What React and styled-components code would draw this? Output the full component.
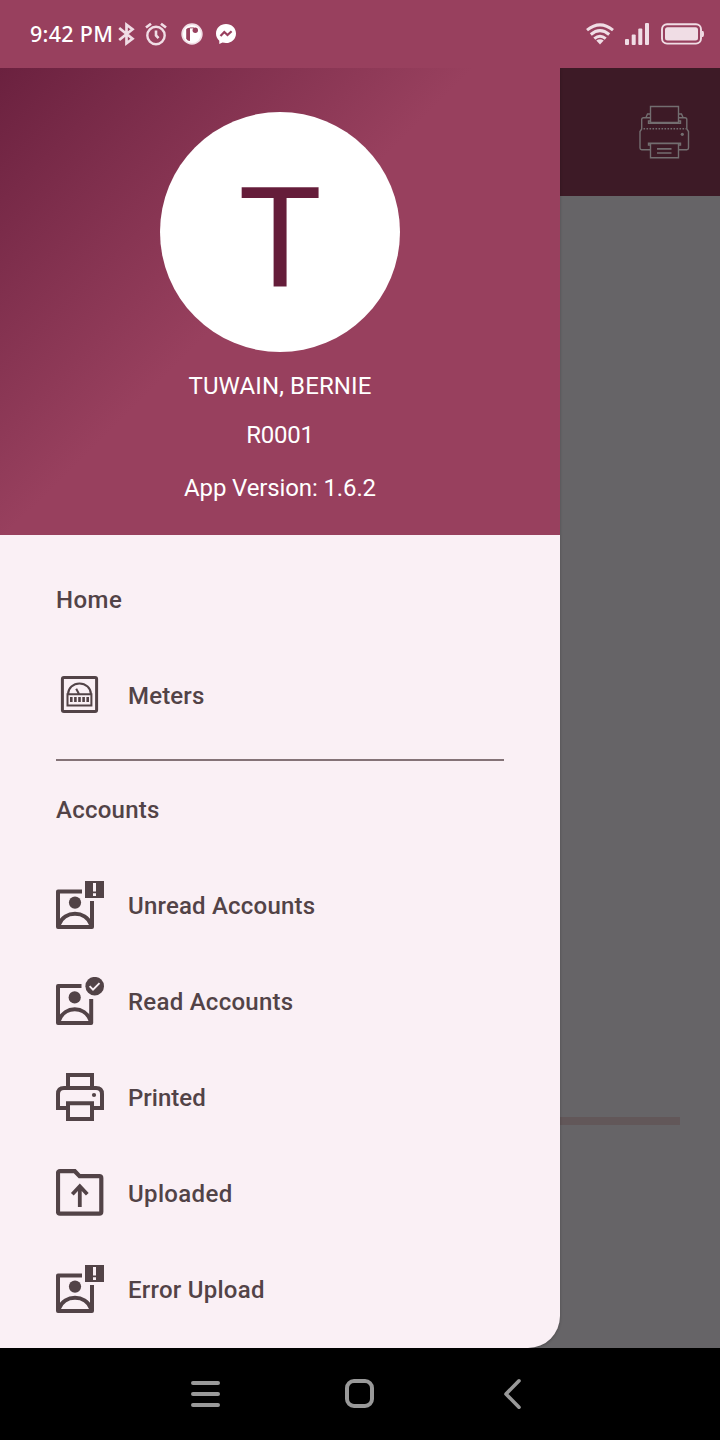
import React from "react";
import styled, { createGlobalStyle } from "styled-components";

const GlobalStyle = createGlobalStyle`
  * { box-sizing: border-box; }
  body { margin: 0; background: #000; }
  svg { display: block; flex: none; }
`;

const Screen = styled.div`
  width: 720px;
  height: 1440px;
  display: flex;
  flex-direction: column;
  overflow: hidden;
  font-family: Roboto, "Liberation Sans", sans-serif;
`;

const StatusBar = styled.header`
  height: 68px;
  flex: none;
  display: flex;
  align-items: center;
  justify-content: space-between;
  padding: 0 15px 0 30px;
  background: #98405e;
  color: #fff;
`;

const StatusGroup = styled.div`
  display: flex;
  align-items: center;
  gap: ${(p) => p.$gap}px;
`;

const Clock = styled.span`
  width: 83px;
  white-space: nowrap;
  font: 500 21.5px/30px "Noto Sans", sans-serif;
  letter-spacing: 0.3px;
`;

const Body = styled.div`
  height: 1280px;
  flex: none;
  display: grid;
  grid-template-columns: 560px 160px;
  background: #666467;
  overflow: hidden;
`;

const Drawer = styled.aside`
  background: #faf0f5;
  border-radius: 0 0 32px 0;
  overflow: hidden;
  box-shadow: 0 1px 3px rgba(0, 0, 0, 0.25);
  z-index: 1;
`;

const Profile = styled.section`
  height: 467px;
  padding-top: 44px;
  display: flex;
  flex-direction: column;
  align-items: center;
  background: linear-gradient(135deg, #6b213f 0%, #98405e 46%);
`;

const Avatar = styled.div`
  width: 240px;
  height: 240px;
  flex: none;
  border-radius: 50%;
  background: #fff;
  color: #651d3a;
  display: flex;
  align-items: center;
  justify-content: center;
  font-size: 140px;
  line-height: 240px;
  padding-top: 12px;
`;

const ProfileLine = styled.div`
  margin-top: ${(p) => p.$top}px;
  height: 32px;
  line-height: 32px;
  font-size: 24px;
  letter-spacing: ${(p) => p.$tracking}px;
  color: #fff;
`;

const Menu = styled.nav`
  padding: 17px 56px 0;
  color: #524347;
  font-size: 24px;
  font-weight: 500;
`;

const SectionTitle = styled.h2`
  margin: 0;
  height: 96px;
  line-height: 96px;
  font-size: inherit;
  font-weight: inherit;
  letter-spacing: ${(p) => p.$tracking}px;
`;

const MenuRow = styled.div`
  height: 96px;
  display: flex;
  align-items: center;
  gap: 24px;
  letter-spacing: ${(p) => p.$tracking}px;
  svg { margin-bottom: 2px; }
`;

const Divider = styled.hr`
  margin: 15px 0 1px;
  height: 2px;
  border: 0;
  background: #847377;
`;

const Scrim = styled.main`
  display: flex;
  flex-direction: column;
`;

const AppBar = styled.div`
  height: 128px;
  padding: 36px 0 0 78px;
  background: #3d1a26;
`;

const Progress = styled.div`
  width: 120px;
  height: 8px;
  margin-top: 921px;
  background: #625759;
`;

const NavBar = styled.footer`
  height: 92px;
  flex: none;
  display: flex;
  align-items: center;
  gap: 124px;
  padding-left: 190px;
  background: #000;
`;

const Icon = ({ w = 48, h = 48, children, ...rest }) => (
  <svg width={w} height={h} viewBox={`0 0 ${w} ${h}`} fill="none" {...rest}>
    {children}
  </svg>
);

const MeterIcon = () => (
  <Icon stroke="#524347">
    <rect x="6.4" y="6.4" width="34.2" height="34.2" rx="1.5" strokeWidth="3" />
    <path d="M11.5 23.3H35.4V34.6H11.5ZM12.1 23A11.4 10.6 0 0 1 34.9 23M20.2 17.8L23 23" strokeWidth="2" />
    <path d="M14 28.6H33.5" strokeWidth="5" strokeDasharray="2.6 1.5" />
  </Icon>
);

const AlertAccountIcon = () => (
  <Icon>
    <path d="M26 10.5H2V46H36V20" stroke="#524347" strokeWidth="4" strokeLinejoin="round" />
    <path d="M3 43.5C8.5 29 29.5 29 35 43.5" stroke="#524347" strokeWidth="4" />
    <circle cx="19" cy="21.6" r="6.1" fill="#524347" />
    <path d="M29 0H48V17H29Z" fill="#524347" />
    <path d="M37 2H40V10.4H37ZM37 12.2H40V15H37Z" fill="#faf0f5" />
  </Icon>
);

const CheckAccountIcon = () => (
  <Icon>
    <path d="M25.5 9H2V46H35.2V22" stroke="#524347" strokeWidth="4" strokeLinejoin="round" />
    <path d="M3 43.5C8.5 28.5 29 28.5 34.5 43.5" stroke="#524347" strokeWidth="4" />
    <circle cx="18.7" cy="20.4" r="6.1" fill="#524347" />
    <circle cx="38.7" cy="9.2" r="9.3" fill="#524347" />
    <path d="M33.6 9.2L37 12.6L43.5 6.1" stroke="#faf0f5" strokeWidth="1.9" />
  </Icon>
);

const PrintIcon = () => (
  <Icon stroke="#524347" strokeWidth="4">
    <path d="M12 14V2H36V14M12 35H2V21Q2 15 8 15H40Q46 15 46 21V35H36M12 30.3H36V46H12Z" />
    <circle cx="38" cy="22" r="2.1" fill="#524347" stroke="none" />
  </Icon>
);

const UploadIcon = () => (
  <Icon stroke="#524347" strokeWidth="4.2">
    <path d="M4 2.2H18.8L23.6 7.1H43.3Q45.3 7.1 45.3 9.1V42.7Q45.3 44.7 43.3 44.7H4Q2 44.7 2 42.7V4.2Q2 2.2 4 2.2Z" />
    <path d="M23.8 38V17M16.3 25.2L23.8 17.3L31.3 25.2" strokeWidth="3.8" />
  </Icon>
);

const AppBarPrinter = () => (
  <Icon w={52} h={56} stroke="#736e70" strokeWidth="1.4">
    <path d="M12.5 2.5H40.5V18.5H12.5ZM12 17H10.5V19.2H42.5V17H41M12.5 10H9.5L8 13.5M40.5 10H43.5L45 13.5M12.5 13.7H5.5Q3.7 13.7 3.7 15.5V25L2 27.5V44Q2 45.7 3.7 45.7H12M40.5 13.7H47Q48.8 13.7 48.8 15.5V25L50.5 27.5V44Q50.5 45.7 48.8 45.7H41M12.5 41H10.5V39.2H42.5V41H40.5M12.5 39.5H40.5V53.7H12.5Z" />
    <path d="M5.5 24.8H48" strokeDasharray="1.6 1.4" />
    <path d="M19 44.8H33.5M19 49H33.5" strokeWidth="1.7" />
    <circle cx="44.3" cy="30.3" r="1.6" fill="#736e70" stroke="none" />
  </Icon>
);

const BluetoothIcon = () => (
  <Icon w={18} h={24} stroke="#f0dde5" strokeWidth="2.7">
    <path d="M1.2 6L14.5 16.8L8.5 21.3V2.7L14.5 7.2L1.2 18" />
  </Icon>
);

const AlarmIcon = () => (
  <Icon w={22} h={24} stroke="#f0dde5">
    <circle cx="11" cy="13.5" r="8.7" strokeWidth="2.4" />
    <path d="M1 5.5L6 1.7M21 5.5L16 1.7" strokeWidth="2.7" />
    <path d="M11 8.5V13.5L13.5 16.2" strokeWidth="2.6" />
  </Icon>
);

const RoundAppIcon = () => (
  <Icon w={22} h={22}>
    <circle cx="11" cy="11" r="9.9" fill="#fff" stroke="#f0dde5" strokeWidth="1.6" />
    <path d="M5.2 6.2Q6.5 4.3 9 4.8V17.8Q6.5 18.3 5.2 15.8Z" fill="#98405e" />
    <circle cx="14.3" cy="7.2" r="2.7" fill="#98405e" />
    <path d="M9 4.9H13" stroke="#98405e" strokeWidth="0.9" />
  </Icon>
);

const MessengerIcon = () => (
  <Icon w={20} h={22}>
    <path d="M10 1C4.3 1 0 5 0 10.5C0 13.5 1.3 16 3.3 17.7V21L6.5 19.6C7.6 19.9 8.8 20.1 10 20.1C15.7 20.1 20 16 20 10.5C20 5 15.7 1 10 1Z" fill="#fff" />
    <path d="M4.5 13L8.3 9L11.5 12L15.6 8.3" stroke="#98405e" strokeWidth="2.2" />
  </Icon>
);

const WifiIcon = () => (
  <Icon w={28} h={22} stroke="#f0dde5" strokeWidth="3">
    <path d="M1 7.2Q14 -3.4 27 7.2M4.8 11.5Q14 3.8 23.2 11.5M8.3 15.6Q14 10.8 19.7 15.6" />
    <path d="M10.3 17.6Q14 14.8 17.7 17.6L14 21.5Z" fill="#f0dde5" stroke="none" />
  </Icon>
);

const SignalIcon = () => (
  <Icon w={24} h={22} fill="#f0dde5">
    <rect y="16" width="4" height="6" rx="1" />
    <rect x="6.7" y="11.5" width="4" height="10.5" rx="1" />
    <rect x="13.3" y="5.5" width="4" height="16.5" rx="1" />
    <rect x="20" width="4" height="22" rx="1" />
  </Icon>
);

const BatteryIcon = () => (
  <Icon w={44} h={22}>
    <rect x="1" y="1.2" width="39" height="19.4" rx="5" stroke="#f0dde5" strokeWidth="1.9" />
    <rect x="4" y="4.2" width="33" height="13.4" rx="2.5" fill="#f0dde5" />
    <path d="M41 8H42Q43 8 43 11Q43 14 42 14H41Z" fill="#f0dde5" />
  </Icon>
);

const accountItems = [
  ["Unread Accounts", AlertAccountIcon, 0.2],
  ["Read Accounts", CheckAccountIcon, 0.26],
  ["Printed", PrintIcon, 0],
  ["Uploaded", UploadIcon, 0.35],
  ["Error Upload", AlertAccountIcon, 0.25],
];

export default function App() {
  return (
    <Screen>
      <GlobalStyle />
      <StatusBar>
        <StatusGroup $gap={9}>
          <StatusGroup $gap={5}>
            <Clock>9:42 PM</Clock>
            <BluetoothIcon />
          </StatusGroup>
          <StatusGroup $gap={13}>
            <StatusGroup $gap={14}>
              <AlarmIcon />
              <RoundAppIcon />
            </StatusGroup>
            <MessengerIcon />
          </StatusGroup>
        </StatusGroup>
        <StatusGroup $gap={12}>
          <StatusGroup $gap={11}>
            <WifiIcon />
            <SignalIcon />
          </StatusGroup>
          <BatteryIcon />
        </StatusGroup>
      </StatusBar>
      <Body>
        <Drawer>
          <Profile>
            <Avatar>T</Avatar>
            <ProfileLine $top={18} $tracking={0.12}>TUWAIN, BERNIE</ProfileLine>
            <ProfileLine $top={17} $tracking={-0.2}>R0001</ProfileLine>
            <ProfileLine $top={21} $tracking={-0.13}>App Version: 1.6.2</ProfileLine>
          </Profile>
          <Menu>
            <SectionTitle $tracking={0.45}>Home</SectionTitle>
            <MenuRow $tracking={0.15}>
              <MeterIcon />
              Meters
            </MenuRow>
            <Divider />
            <SectionTitle $tracking={0.25}>Accounts</SectionTitle>
            {accountItems.map(([label, Glyph, tracking]) => (
              <MenuRow key={label} $tracking={tracking}>
                <Glyph />
                {label}
              </MenuRow>
            ))}
          </Menu>
        </Drawer>
        <Scrim>
          <AppBar>
            <AppBarPrinter />
          </AppBar>
          <Progress />
        </Scrim>
      </Body>
      <NavBar>
        <Icon w={30} h={30} stroke="#999" strokeWidth="4" strokeLinecap="round">
          <path d="M3 4H28M3 15H28M3 26H28" />
        </Icon>
        <Icon w={30} h={30} stroke="#999" strokeWidth="4">
          <rect x="3" y="2" width="25" height="25" rx="7" />
        </Icon>
        <Icon w={30} h={32} stroke="#999" strokeWidth="3.6" strokeLinecap="round" strokeLinejoin="round">
          <path d="M21 2.8L8 16L21 29.2" />
        </Icon>
      </NavBar>
    </Screen>
  );
}
